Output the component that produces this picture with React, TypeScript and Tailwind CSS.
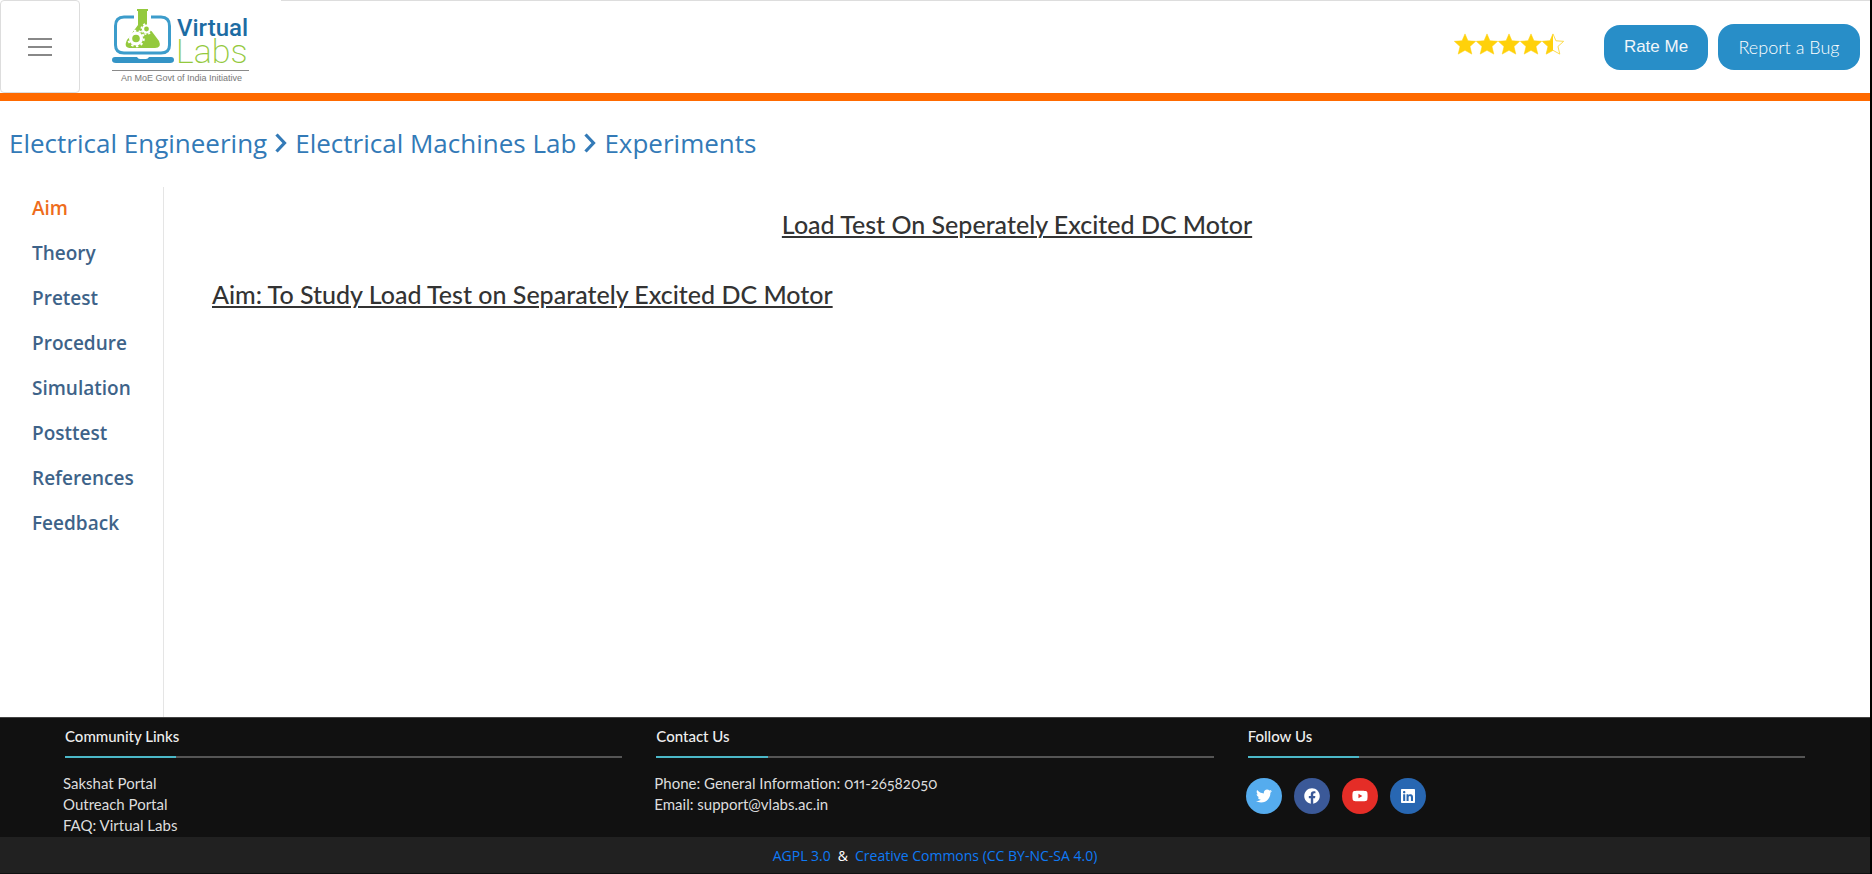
import { FaTwitter, FaFacebook, FaYoutube, FaLinkedin } from 'react-icons/fa';

const sections = ['Aim', 'Theory', 'Pretest', 'Procedure', 'Simulation', 'Posttest', 'References', 'Feedback'];

const socials = [
  { name: 'Twitter', Icon: FaTwitter, color: 'bg-[#55acee]' },
  { name: 'Facebook', Icon: FaFacebook, color: 'bg-[#3b5998]' },
  { name: 'YouTube', Icon: FaYoutube, color: 'bg-[#e52d27]' },
  { name: 'LinkedIn', Icon: FaLinkedin, color: 'bg-[#2867b2]' },
];

const STAR = 'M12 0.5 L15.2 8 L23.6 8.6 L17.4 14.2 L19.4 22.5 L12 18.4 L4.6 22.5 L6.600 14.2 L0.4 8.6 L8.8 8 Z';

function Star({ half = false }: { half?: boolean }) {
  return (
    <svg viewBox="0 0 24 23" className="h-[22px] w-[22px]" aria-hidden="true">
      {half ? (
        <>
          <path d={STAR} fill="#fff" stroke="#fbd83c" strokeWidth="1" />
          <path d="M12 0.5 V18.4 L4.6 22.5 L6.6 14.2 L0.4 8.6 L8.8 8 Z" fill="#ffd10a" />
        </>
      ) : (
        <path d={STAR} fill="#ffd10a" stroke="#ffd10a" strokeWidth="0.6" />
      )}
    </svg>
  );
}

function Logo() {
  return (
    <svg viewBox="0 0 138 76" className="h-[76px] w-[138px]" role="img" aria-label="Virtual Labs">
      <path d="M22 9 H12 Q3.500 9 3.500 18 V37 Q3.500 45 12 45 H49 Q57.500 45 57.500 37 V18 Q57.500 9 49 9 H39" fill="none" stroke="#3c9ccb" strokeWidth="3" />
      <path d="M3 49 H25 Q26 51 28 51 H34 Q36 51 37 49 H59 Q62 49 62 52 Q62 55 58 55 H4 Q0 55 0 52 Q0 49 3 49 Z" fill="#3494c6" />
      <path d="M25 1 H36 V3 H35 V17 L47 33 Q50 40 43 40 H19 Q11 40 15 32 L26 17 V3 H25 Z" fill="#94c93d" />
      <circle cx="24" cy="30.500" r="5.400" fill="none" stroke="#fff" strokeWidth="3.200" />
      <circle cx="24" cy="30.500" r="7.800" fill="none" stroke="#fff" strokeWidth="2" strokeDasharray="2.400 2.501" />
      <circle cx="34.500" cy="21" r="3.500" fill="none" stroke="#fff" strokeWidth="2.200" />
      <circle cx="34.500" cy="21" r="5.200" fill="none" stroke="#fff" strokeWidth="1.600" strokeDasharray="2 2.084" />
      <text x="65" y="28" fill="#1d6ca3" fontFamily="Roboto, sans-serif" fontWeight="500" fontSize="24">Virtual</text>
      <text x="64" y="55" fill="#94c93d" fontFamily="Roboto, sans-serif" fontWeight="200" fontSize="34">Labs</text>
      <path d="M0 62.500 H137" stroke="#8a8a8a" strokeWidth="1" />
      <text x="9" y="73" fill="#777" fontFamily="Liberation Sans, Arial, sans-serif" fontSize="9">An MoE Govt of India Initiative</text>
    </svg>
  );
}

function Chevron() {
  return (
    <svg viewBox="0 0 14 20" className="h-5 w-[14px]" aria-hidden="true">
      <path d="M2.500 1.500 L10.500 10 L2.500 18.500" fill="none" stroke="#337ab7" strokeWidth="3.200" />
    </svg>
  );
}

function FooterHeading({ children }: { children: string }) {
  return (
    <>
      <h2 className="text-[15px] leading-5 font-medium text-[#eee]">{children}</h2>
      <div className="mt-[10px] h-[2px] bg-[#555]">
        <div className="h-full w-1/5 bg-[#4bb8c8]" />
      </div>
    </>
  );
}

export default function App() {
  return (
    <div className="flex min-h-screen flex-col border-r-2 border-black bg-white font-['Lato',sans-serif]">
      <header className="flex h-[101px] items-start border-b-8 border-[#ff6a00]">
        <button type="button" aria-label="Menu" className="flex h-[93px] w-20 flex-col items-center justify-center gap-[6px] rounded border border-[#ddd]">
          <span className="h-[2px] w-6 bg-[#888]" />
          <span className="h-[2px] w-6 bg-[#888]" />
          <span className="h-[2px] w-6 bg-[#888]" />
        </button>
        <a href="#home" className="w-[201px] pt-2 pl-8">
          <Logo />
        </a>
        <div className="flex h-[93px] flex-1 items-center justify-end border-t border-[#ddd] pr-[10px]">
          <div className="mr-10 flex pb-[6px]" role="img" aria-label="Rated 4.5 out of 5">
            <Star />
            <Star />
            <Star />
            <Star />
            <Star half />
          </div>
          <button type="button" className="mr-[10px] h-[45px] w-26 rounded-2xl bg-[#288ec8] font-['Liberation_Sans',Arial,sans-serif] text-[17px] text-[#f0f6fa]">
            Rate Me
          </button>
          <button type="button" className="h-[46px] w-[142px] rounded-2xl bg-[#288ec8] text-lg font-light text-white">
            Report a Bug
          </button>
        </div>
      </header>

      <nav aria-label="Breadcrumb" className="flex h-[86px] items-center pb-[2px] pl-[9px] font-['Open_Sans',sans-serif] text-[26px] text-[#337ab7]">
        <a href="#engineering">Electrical Engineering</a>
        <span className="px-[7px]"><Chevron /></span>
        <a href="#lab">Electrical Machines Lab</a>
        <span className="px-[7px]"><Chevron /></span>
        <a href="#experiments">Experiments</a>
      </nav>

      <div className="flex flex-1">
        <nav aria-label="Experiment sections" className="w-[164px] border-r border-[#e5e5e5] pl-8 font-['Open_Sans',sans-serif]">
          <ul className="-mt-px">
            {sections.map((name) => (
              <li key={name}>
                <a href={`#${name}`} className={`block text-[19px] leading-[45px] font-semibold ${name === 'Aim' ? 'text-[#ee6c1c]' : 'text-[#3e6389]'}`}>
                  {name}
                </a>
              </li>
            ))}
          </ul>
        </nav>
        <main className="flex-1 px-12 pt-[21px] text-[25px] leading-8 font-medium text-[#333] underline decoration-2 underline-offset-2">
          <h1 className="text-center">Load Test On Seperately Excited DC Motor</h1>
          <h2 className="mt-[38px]">Aim: To Study Load Test on Separately Excited DC Motor</h2>
        </main>
      </div>

      <footer className="bg-[#111] text-[15px] leading-[21px] text-[#ddd]">
        <div className="grid h-[120px] grid-cols-3 gap-[34px] border-t border-[#444] px-[65px] pt-2">
          <section>
            <FooterHeading>Community Links</FooterHeading>
            <ul className="-ml-[2px] pt-[15px]">
              <li><a href="#sakshat">Sakshat Portal</a></li>
              <li><a href="#outreach">Outreach Portal</a></li>
              <li><a href="#faq">FAQ: Virtual Labs</a></li>
            </ul>
          </section>
          <section>
            <FooterHeading>Contact Us</FooterHeading>
            <div className="-ml-[2px] pt-[15px] oldstyle-nums proportional-nums">
              <p>Phone: General Information: 011-26582050</p>
              <p>Email: support@vlabs.ac.in</p>
            </div>
          </section>
          <section>
            <FooterHeading>Follow Us</FooterHeading>
            <div className="-ml-[2px] flex gap-3 pt-5">
              {socials.map(({ name, Icon, color }) => (
                <a key={name} href={`#${name}`} aria-label={name} className={`flex h-9 w-9 items-center justify-center rounded-full text-base text-white ${color}`}>
                  <Icon />
                </a>
              ))}
            </div>
          </section>
        </div>
        <div className="flex h-[37px] items-center justify-center gap-[7px] border-b border-[#111] bg-[#212121] pt-[2px] font-['Open_Sans',sans-serif] text-sm text-white">
          <a href="#agpl" className="font-medium text-[#0f7af5]">AGPL 3.0</a>
          <span>&amp;</span>
          <a href="#cc" className="font-medium text-[#0f7af5]">Creative Commons (CC BY-NC-SA 4.0)</a>
        </div>
      </footer>
    </div>
  );
}
